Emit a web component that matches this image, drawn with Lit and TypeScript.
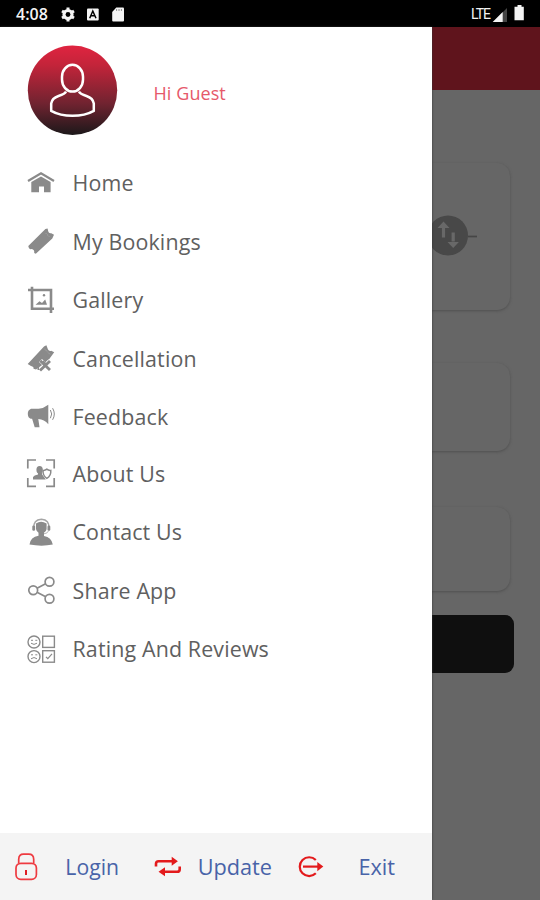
import { LitElement, html, css, svg } from "lit";
import { customElement } from "lit/decorators.js";

const menu = [
  { label: "Home", icon: svg`<path d="M2 13 15 5.2 28 13" fill="none" stroke="#8a8a8a" stroke-width="2.2"/><path d="M5.3 14 15 8.5 24.6 14V24.3H18V18.5H13V24.3H5.3Z"/>` },
  { label: "My Bookings", icon: svg`<path d="M2.3 20 19.4 3 21.6 2.4 22.2 5.2Q22.8 7.8 25.3 7.2L28 8.8 26.3 12.4 9.8 27.8 8.2 27.1Q8.7 23.5 5.7 23Q2.8 23.8 2.3 20Z"/><path d="m19.6 7 3.6 3.6" stroke="#bbb" stroke-width=".7" stroke-dasharray="1 1"/>` },
  { label: "Gallery", icon: svg`<path d="M2 5H25V28M6 1.8V23.8H28" fill="none" stroke="#8a8a8a" stroke-width="2.6"/><path d="m9.5 19.8 4-3.6 2.5 1.8 3.2-3.4 1.8 5.2Z"/><circle cx="18" cy="10.3" r="1.2"/>` },
  { label: "Cancellation", icon: svg`<path d="M1.7 21 18 3.5 20.4 2.3 22 6.5Q23 8.5 25.2 7.8L28.2 9.2 22 17.7 10 26.5 7.5 25.7Q8 23.5 5 22.9Z"/><path d="m18.4 5.8 6 6" stroke="#bbb" stroke-width=".7" stroke-dasharray="1 1"/><path d="m14.5 17.5 9.5 9.5M24 17.7 14.5 27" stroke="#fff" stroke-width="4.2"/><path d="m14.3 17.8 9.7 9.2M24 18l-10 9.5" stroke="#8a8a8a" stroke-width="2.9"/><path d="M12.3 20V27M17 18l3 3" stroke="#8a8a8a" stroke-width="1.6"/>` },
  { label: "Feedback", icon: svg`<path d="M5 6.8H12.6Q17.5 6.4 22.3 2.7V22.2Q18.3 17.5 12.3 17L13.5 25.3H8.7L6.1 16.8H4.7Q2 16 1.8 12.1Q1.6 8.3 5 6.8Z"/><path d="M24.4 8Q27 11.9 24.4 16.2M26.6 6.2Q30 12 26.6 17.8" fill="none" stroke="#8a8a8a" stroke-width="1"/>` },
  { label: "About Us", tight: true, icon: svg`<path d="M1.8 10.5V2H10M20 2H28.2V10.5M28.2 20V28.3H20M10 28.3H1.8V20" fill="none" stroke="#8a8a8a" stroke-width="1.7"/><ellipse cx="13.6" cy="11.8" rx="3.2" ry="3.9"/><path d="M7 21.5V19Q8 17.2 12 16.5V15h4v1.3L19.8 21.5Z"/><path d="M20.8 11.2q1.8 1.5 4 1.2Q25.2 18 20.8 20.3 16.8 18 17 12.4q2 .3 3.8-1.2Z" fill="#fff" stroke="#8a8a8a" stroke-width="1.5"/>` },
  { label: "Contact Us", icon: svg`<path d="M7.8 11Q7.2 2.7 15.4 2.2 23.6 2.7 22.8 11" fill="none" stroke="#a5a5a5" stroke-width="1.5"/><path d="M10 6.5Q15 2.8 20.6 6.5V12q-.8 4-5.2 4.4Q10.8 15.8 10 12Z"/><rect x="6.3" y="8.5" width="2.8" height="5.2" rx="1.2"/><rect x="21.5" y="8.5" width="2.8" height="5.2" rx="1.2"/><path d="M22.8 13.5q-1 3.1-5.5 3.5" fill="none" stroke="#a5a5a5" stroke-width=".8"/><path d="M12.5 15h5.5v4q7.5 1.3 8.8 8.5-11 2.3-23.3 0Q4.5 20 12.5 18.8Z"/>` },
  { label: "Share App", icon: svg`<g fill="none" stroke="#8a8a8a" stroke-width="1.7"><circle cx="7.2" cy="15.2" r="4.4"/><circle cx="23.5" cy="6.7" r="4.4"/><circle cx="23.5" cy="23.8" r="4.4"/><path d="m11 13.2 8.6-4.4M11 17.2l8.7 4.5"/></g>` },
  { label: "Rating And Reviews", icon: svg`<g fill="none" stroke="#8a8a8a" stroke-width="1.4"><circle cx="8" cy="8" r="6"/><circle cx="8" cy="22.6" r="6"/><rect x="16.7" y="2.2" width="11.7" height="11.2"/><rect x="16.7" y="16.7" width="11.7" height="11.5"/><path d="M5 9.2q3 2.4 6 0M5 24.8q3-2.6 6 0M5 6.3h2M9.3 6.3h2M5 20.8h2M9.3 20.8h2" stroke-width="1"/><path d="m20 22.8 1.8 1.9 4.2-4.8" stroke-width="1.2"/></g>` },
];

const actions = [
  { label: "Login", cls: "login", icon: svg`<g fill="none" stroke="#ee3a40" stroke-width="1.7"><rect x="5" y="11.3" width="20.4" height="16" rx="4.8"/><path d="M7.7 11.3V7.2Q7.9 2.2 12.5 2.2H17.8Q22.5 2.2 22.7 7.2V11.3"/></g><path d="M15 18v5" stroke="#df1d24" stroke-width="2"/>` },
  { label: "Update", cls: "update", icon: svg`<g fill="none" stroke="#e31a1c" stroke-width="2.6"><path d="M3 14.5V11.8Q3 9.2 5.6 9.2H20M26.7 14.5V17.2Q26.7 19.8 24 19.8H10"/></g><path d="m18.7 4.7 6.2 4.5-6.2 4.6ZM12 15.3v9l-6.5-4.5Z" fill="#e31a1c"/>` },
  { label: "Exit", cls: "exit", icon: svg`<path d="M20.8 8A9.4 9.4 0 1 0 20.8 21.3" fill="none" stroke="#e31a1c" stroke-width="2.2"/><path d="M8 14.6H24" stroke="#e31a1c" stroke-width="2.2"/><path d="m22.3 9.9 6 4.7-6 4.7Z" fill="#e31a1c"/>` },
];

@customElement("app-root")
export class AppRoot extends LitElement {
  static styles = css`
    :host { display: block; height: 900px; overflow: hidden; font-family: "Open Sans", "Noto Sans", sans-serif; }
    * { box-sizing: border-box; }
    svg { display: block; flex: none; }
    .status { height: 27px; background: #000; color: #f4f4f4; display: flex; align-items: center; padding: 0 14px 0 16px; }
    .time { width: 45px; font-weight: 600; font-size: 16px; line-height: 27px; padding-top: 1px; }
    .status .glyphs { margin-right: auto; }
    .lte { font-family: Roboto, sans-serif; font-size: 14px; letter-spacing: -1px; margin: 0 2px 0 0; }
    .stack { display: grid; grid-template: 873px / 540px; }
    .stack > * { grid-area: 1 / 1; }
    .page { background: #666; display: flex; flex-direction: column; }
    .appbar { height: 63px; background: #5f141c; flex: none; }
    .card { width: 481px; margin-left: 29px; border-radius: 13px; flex: none; box-shadow: 0 1px 3px #505050; background: #666; }
    .trip { height: 147px; margin-top: 73px; display: flex; align-items: center; justify-content: flex-end; padding: 0 33px 2px 0; }
    .date { height: 88px; margin-top: 52.5px; }
    .pax { height: 84px; margin-top: 56px; }
    .search { width: 486px; height: 58px; margin: 24px 0 0 28px; border-radius: 9px; background: #0f0f0f; flex: none; }
    .drawer { width: 432px; background: #fff; display: flex; flex-direction: column; box-shadow: 0 0 2px #333; }
    .profile { height: 126.5px; display: flex; align-items: center; padding: 1px 0 0 27px; flex: none; }
    .hello { color: #e6596a; font-size: 18px; letter-spacing: .08px; margin: 5px 0 0 35.5px; }
    .item { height: 58.5px; display: flex; align-items: center; padding-left: 26px; gap: 16.5px; flex: none; color: #606060; font-size: 21.4px; letter-spacing: .15px; }
    .item svg { fill: #8a8a8a; }
    .item.tight { margin-top: -2px; }
    .footer { margin-top: auto; height: 67px; background: #f4f4f4; display: flex; align-items: center; color: #4863a8; font-size: 21.7px; flex: none; }
    .action { display: flex; align-items: center; justify-content: space-between; }
    .login { margin-left: 11px; width: 108px; }
    .login span { font-size: 21.2px; }
    .update { margin-left: 34px; width: 119px; }
    .exit { margin-left: 23px; width: 100px; }
  `;

  render() {
    return html`
      <div class="status">
        <span class="time">4:08</span>
        <svg class="glyphs" width="66" height="20" viewBox="0 0 66 20" fill="#f4f4f4">
          <circle cx="7" cy="10.5" r="4" fill="none" stroke="#f4f4f4" stroke-width="3.2"/>
          <path d="M7 3.5v14M1 7l12 7M13 7 1 14" stroke="#f4f4f4" stroke-width="3"/><circle cx="7" cy="10.5" r="2.4" fill="#000"/>
          <rect x="26" y="4.5" width="11.7" height="12" rx="1"/>
          <path d="m28.7 14.2 3.1-7.2 3.2 7.2M29.9 11.7h3.9" fill="none" stroke="#000" stroke-width="1.5"/>
          <path d="M55.3 3.5H62q1 0 1 1V16.4q0 1-1 1H52.2q-1 0-1-1V8Z"/><path d="M55.6 5v2M58 5v2M60.4 5v2" stroke="#777" stroke-width=".8"/>
        </svg>
        <span class="lte">LTE</span>
        <svg width="34" height="20" viewBox="0 0 34 20">
          <path d="M15 4V18H1Z" fill="#444"/><path d="M10.7 8V18H.7Z" fill="#f4f4f4"/>
          <path d="M25.5 1h4v1.8h2.3V16.3H22.5V2.8h3Z" fill="#f4f4f4"/>
        </svg>
      </div>
      <div class="stack">
        <div class="page">
          <div class="appbar"></div>
          <div class="card trip">
            <svg width="50" height="42" viewBox="0 0 50 42">
              <circle cx="21" cy="20.5" r="20" fill="#484848"/><path d="M41 21.5h9" stroke="#464646" stroke-width="1.7"/>
              <path d="M16.5 22.5V11M26.2 17.5v9" stroke="#686868" stroke-width="3.2"/>
              <path d="m16.5 6.5-6 6.5h12ZM26.2 33l-5.7-6h11.4Z" fill="#686868"/>
            </svg>
          </div>
          <div class="card date"></div>
          <div class="card pax"></div>
          <div class="search"></div>
        </div>
        <div class="drawer">
          <div class="profile">
            <svg width="91" height="91" viewBox="0 0 91 91">
              <defs><linearGradient id="crimson" x2="0" y2="1"><stop stop-color="#e02440"/><stop offset=".22" stop-color="#c3243a"/><stop offset=".65" stop-color="#702330"/><stop offset="1" stop-color="#1c181a"/></linearGradient></defs>
              <circle cx="45.5" cy="45.3" r="44.7" fill="url(#crimson)"/>
              <g fill="none" stroke="#fff" stroke-width="2.5"><rect x="35" y="19.8" width="21" height="26.8" rx="10.5" ry="12"/>
              <path d="M39 46.5Q38 49 31.5 51 25 53.2 24.2 58.5V65.8Q33 70.8 45.5 70.8T66.8 65.8V58.5Q66 53.2 59.5 51 53 49 52 46.5"/></g>
            </svg>
            <span class="hello">Hi Guest</span>
          </div>
          ${menu.map((m) => html`<div class="item ${m.tight ? "tight" : ""}"><svg width="30" height="30" viewBox="0 0 30 30">${m.icon}</svg><span>${m.label}</span></div>`)}
          <div class="footer">
            ${actions.map((a) => html`<div class="action ${a.cls}"><svg width="30" height="30" viewBox="0 0 30 30">${a.icon}</svg><span>${a.label}</span></div>`)}
          </div>
        </div>
      </div>`;
  }
}
